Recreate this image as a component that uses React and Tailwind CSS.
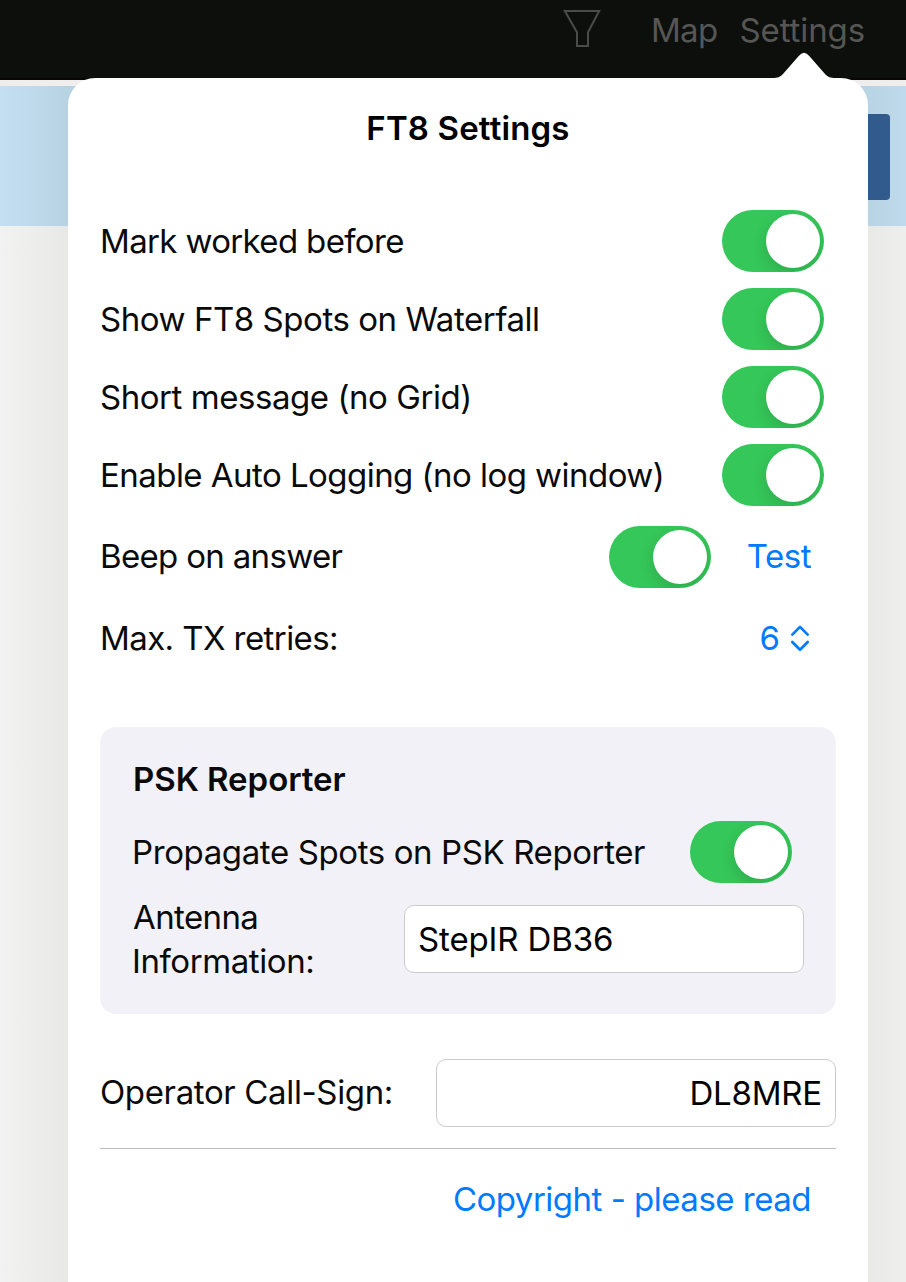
import React from "react";

function Toggle() {
  return (
    <span
      role="switch"
      aria-checked="true"
      className="flex h-[62px] w-[102px] shrink-0 items-center justify-end rounded-full bg-[#35c759] p-1 overflow-hidden"
    >
      <span className="size-[54px] rounded-full bg-white shadow-[0_6px_16px_rgba(0,0,0,0.14)]" />
    </span>
  );
}

function SwitchRow({ label, tracking }) {
  return (
    <div className="flex h-[62px] items-center justify-between pr-3">
      <span className={tracking}>{label}</span>
      <Toggle />
    </div>
  );
}

function FilterIcon() {
  return (
    <svg className="h-[40px] w-[40px]" viewBox="0 0 40 40" fill="none" stroke="#4b4b4a" strokeWidth="2">
      <path d="M2.8 3H37.2L26 24.3V38H15V24.3Z" />
    </svg>
  );
}

function UpDownIcon() {
  return (
    <svg className="h-[28px] w-[20px]" viewBox="0 0 20 28" fill="none" stroke="#007aff" strokeWidth="2.7" strokeLinecap="round" strokeLinejoin="round">
      <path d="M2.3 10.6L10 2.9L17.7 10.6" />
      <path d="M2.3 18L10 25.7L17.7 18" />
    </svg>
  );
}

function Backdrop() {
  return (
    <div className="flex h-full flex-col">
      <header className="flex h-20 shrink-0 items-start justify-end border-b-2 border-[#080606] bg-[#0d0f0c] pr-[41px] text-[#565655]">
        <div className="mt-2 mr-[49px]">
          <FilterIcon />
        </div>
        <span className="mt-2 mr-[22px] tracking-[-0.7px]">Map</span>
        <span className="mt-2 tracking-[-0.1px]">Settings</span>
      </header>
      <div className="h-1.5 shrink-0 bg-[#efeeed]" />
      <div className="flex h-[140px] shrink-0 items-start justify-end bg-[linear-gradient(to_right,#c3dff1_0px,#bedaec_30px,#b7d3e2_68px,#b9d4e3_868px,#bedaec_906px)] pt-7 pr-4">
        <div className="h-[86px] w-[60px] rounded-[4px] bg-[#305b8c]" />
      </div>
      <div className="grow bg-[linear-gradient(to_right,#f2f2f2_0px,#eeeeed_30px,#e8e8e6_68px,#e9e9e8_868px,#eeeeec_906px)]" />
    </div>
  );
}

function Popover() {
  return (
    <section className="absolute top-[78px] left-[68px] flex h-[1204px] w-[800px] flex-col rounded-t-[27px] bg-white px-8">
      <svg className="absolute -top-[26px] left-[704px] h-[27px] w-[64px]" viewBox="0 0 64 27" fill="#fff">
        <path d="M0 27V26C6 26 8 25 11 22L26.500 4.200Q32 -2.800 37.500 4.200L53 22C56 25 58 26 64 26V27Z" />
      </svg>
      <h1 className="mt-7 text-center font-semibold tracking-[0.15px] text-black">FT8 Settings</h1>
      <div className="mt-[60px] flex flex-col gap-4">
        <SwitchRow label="Mark worked before" tracking="tracking-[-0.65px]" />
        <SwitchRow label="Show FT8 Spots on Waterfall" tracking="tracking-[-0.45px]" />
        <SwitchRow label="Short message (no Grid)" tracking="tracking-[-0.45px]" />
        <SwitchRow label="Enable Auto Logging (no log window)" tracking="tracking-[-0.54px]" />
      </div>
      <div className="mt-5 flex h-[62px] items-center pr-[25px]">
        <span className="mb-0.5 grow tracking-[-0.67px]">Beep on answer</span>
        <Toggle />
        <span className="mb-0.5 w-[100px] text-right tracking-[-0.5px] text-[#007aff]">Test</span>
      </div>
      <div className="mt-[28px] flex h-[44px] items-center pr-[26px]">
        <span className="grow tracking-[-0.58px]">Max. TX retries:</span>
        <span className="mr-[10px] text-[#007aff]">6</span>
        <UpDownIcon />
      </div>
      <div className="mt-[67px] h-[287px] shrink-0 rounded-[16px] bg-[#f2f1f7] px-8 pt-[30px]">
        <h2 className="ml-px font-semibold tracking-[-0.05px]">PSK Reporter</h2>
        <div className="mt-5 flex h-[62px] items-center justify-between pr-3">
          <span className="tracking-[-0.39px]">Propagate Spots on PSK Reporter</span>
          <Toggle />
        </div>
        <div className="mt-3 flex h-[88px] items-center justify-between">
          <span className="w-[200px]">
            <span className="ml-px block tracking-[-0.6px]">Antenna</span>
            <span className="block tracking-[-0.42px]">Information:</span>
          </span>
          <div className="flex h-[68px] w-[400px] items-center rounded-[10px] border border-[#cbcbcd] bg-white px-[13px] text-black">
            <span className="tracking-[-0.13px]">StepIR DB36</span>
          </div>
        </div>
      </div>
      <div className="mt-[45px] flex h-[68px] items-center justify-between">
        <span className="mb-0.5 tracking-[-0.36px]">Operator Call-Sign:</span>
        <div className="flex h-[68px] w-[400px] items-center justify-end rounded-[10px] border border-[#cbcbcd] px-[13px] text-black">
          <span className="tracking-[-0.2px]">DL8MRE</span>
        </div>
      </div>
      <div className="mt-[21px] h-px shrink-0 bg-[#bcbcbe]" />
      <span className="mt-7 pr-[25px] text-right tracking-[-0.5px] text-[#007aff]">Copyright - please read</span>
    </section>
  );
}

export default function App() {
  return (
    <main className="relative h-[1282px] w-[906px] overflow-hidden font-['Inter',sans-serif] text-[33px] leading-[44px] text-[#0a0a0a]">
      <Backdrop />
      <Popover />
    </main>
  );
}
